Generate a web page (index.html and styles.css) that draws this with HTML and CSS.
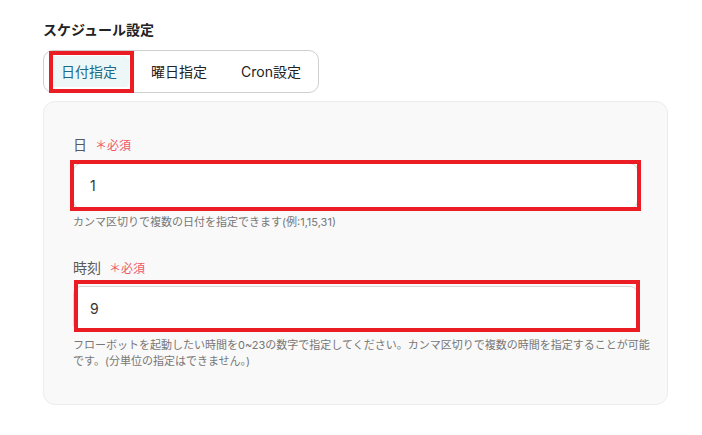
FILE: index.html
```html
<!DOCTYPE html>
<html lang="ja">
<head>
<meta charset="utf-8">
<link rel="stylesheet" href="styles.css">
</head>
<body>
<div class="page">
  <h2 class="title">スケジュール設定</h2>
  <div class="tabs">
    <div class="tab active">日付指定</div>
    <div class="tab">曜日指定</div>
    <div class="tab">Cron設定</div>
  </div>
  <div class="panel">
    <div class="field">
      <div class="label">日<span class="req">＊必須</span></div>
      <div class="input">1</div>
      <div class="help">カンマ区切りで複数の日付を指定できます(例:1,15,31)</div>
    </div>
    <div class="field field2">
      <div class="label">時刻<span class="req">＊必須</span></div>
      <div class="input">9</div>
      <div class="help">フローボットを起動したい時間を0~23の数字で指定してください。カンマ区切りで複数の時間を指定することが可能です。(分単位の指定はできません。)</div>
    </div>
  </div>
  <div class="mark mark-tab"></div>
  <div class="mark mark-day"></div>
  <div class="mark mark-hour"></div>
</div>
</body>
</html>
```
FILE: styles.css
```css
* { box-sizing: border-box; }
html, body { margin: 0; padding: 0; background: #fff; }
body {
  font-family: "Inter", "Noto Sans CJK JP", sans-serif;
  color: #333;
  width: 702px;
  height: 435px;
  overflow: hidden;
}
.page {
  position: relative;
  padding: 20px 34px 0 43px;
}
.title {
  margin: 0;
  font-size: 14px;
  line-height: 20px;
  font-weight: 700;
  color: #222;
}
.tabs {
  margin-top: 10px;
  display: inline-flex;
  gap: 10px;
  padding: 5px;
  border: 1px solid #cfcfcf;
  border-radius: 10px;
  height: 43px;
}
.tab {
  padding: 0 12px;
  font-size: 14px;
  line-height: 31px;
  color: #222;
  border-radius: 4px;
}
.tab.active {
  background: #eef7f8;
  color: #1d6a86;
}
.panel {
  margin-top: 8px;
  width: 625px;
  height: 304px;
  background: #f9f9f9;
  border: 1px solid #ececec;
  border-radius: 12px;
  padding: 33px 29px 0 29px;
}
.field2 { margin-top: 28px; }
.label {
  font-size: 14px;
  line-height: 20px;
  color: #5a5a5a;
  display: flex;
  align-items: baseline;
}
.req {
  margin-left: 8px;
  font-size: 12px;
  color: #ec5a66;
}
.input {
  margin-top: 7px;
  height: 46px;
  background: #fff;
  border: 1px solid #d6d6d6;
  border-radius: 8px;
  padding: 0 16px;
  font-size: 14px;
  line-height: 44px;
  color: #333;
}
.help {
  margin-top: 5px;
  font-size: 11px;
  line-height: 16px;
  color: #777;
  width: 580px;
}
.mark {
  position: absolute;
  border: 4px solid #ec1c24;
}
.mark-tab { left: 49px; top: 51px; width: 85px; height: 42px; }
.mark-day { left: 70px; top: 160px; width: 571px; height: 51px; }
.mark-hour { left: 74px; top: 280px; width: 566px; height: 52px; }
```
